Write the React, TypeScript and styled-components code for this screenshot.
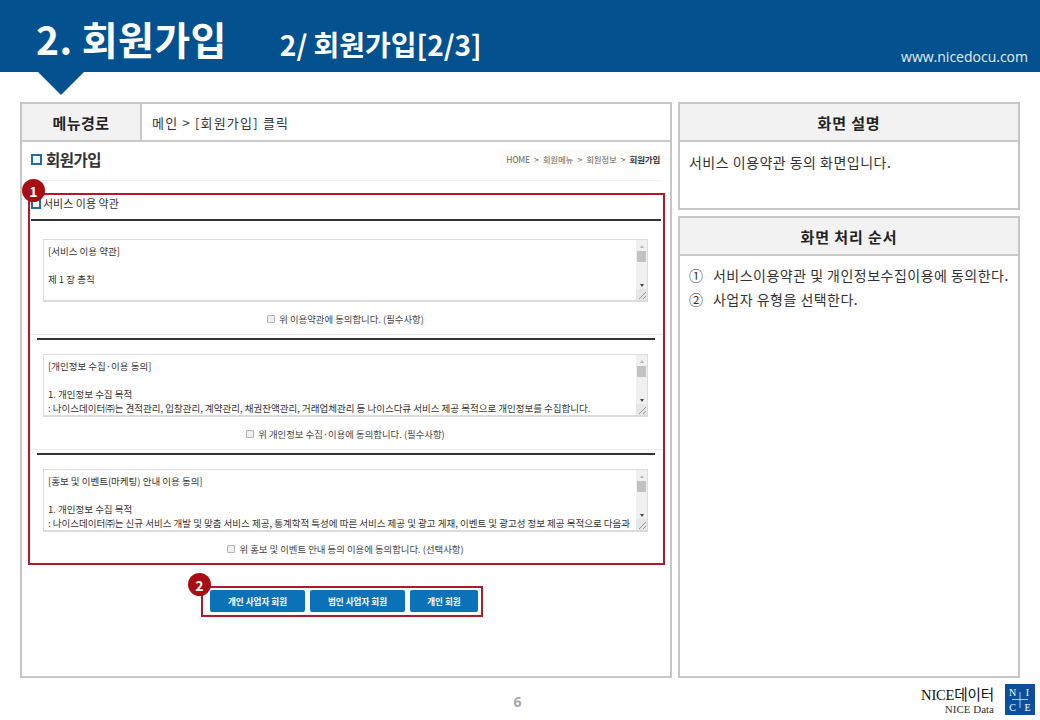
import React from "react";
import styled, { createGlobalStyle } from "styled-components";

const Global = createGlobalStyle`
  html, body { margin: 0; padding: 0; background: #fff; }
  * { box-sizing: border-box; }
  body { font-family: "Noto Sans CJK KR", "Noto Sans", sans-serif; color: #333; }
`;

const Slide = styled.div`
  width: 1040px; height: 720px; display: flex; flex-direction: column; overflow: hidden; background: #fff;
`;
const Header = styled.header`
  position: relative; flex: none; height: 72px; background: #03528f; color: #fff;
  display: flex; align-items: flex-start; padding: 0 12px 0 36px;
  &::after {
    content: ""; position: absolute; left: 38px; top: 72px;
    border-left: 23px solid transparent; border-right: 23px solid transparent; border-top: 23px solid #03528f;
  }
`;
const Title = styled.h1`
  margin: 12px 0 0; font-size: 39px; line-height: 52px; font-weight: 700; letter-spacing: 0.4px;
`;
const Subtitle = styled.h2`
  margin: 25px 0 0 53px; font-size: 28px; line-height: 38px; font-weight: 700; letter-spacing: 0;
`;
const Site = styled.span`
  margin: 47px 0 0 auto; font-family: "Open Sans", sans-serif; font-size: 14px; line-height: 20px; color: #e4edf5;
`;
const Main = styled.main`
  flex: none; height: 576px; margin-top: 30px; padding: 0 20px; display: flex; gap: 6px;
`;
const LeftPanel = styled.section`
  width: 652px; border: 2px solid #c6c6c6; display: flex; flex-direction: column;
`;
const MenuRow = styled.div`
  flex: none; height: 38px; display: flex; border-bottom: 2px solid #c9c9c9;
`;
const MenuLabel = styled.div`
  width: 120px; background: #f2f2f2; border-right: 2px solid #c9c9c9;
  display: flex; align-items: center; justify-content: center; font-size: 15px; font-weight: 700; color: #222; letter-spacing: 0.4px;
`;
const MenuValue = styled.div`
  flex: 1; padding-left: 10px; display: flex; align-items: center; font-size: 13px; letter-spacing: 1.2px; color: #333;
`;
const PageHead = styled.div`
  flex: none; height: 39px; margin: 0 9px 0 7px; padding-bottom: 4px; display: flex; align-items: center; justify-content: space-between;
  border-bottom: 1px solid #eeeeee;
`;
const PageTitle = styled.div`
  display: flex; align-items: center; gap: 4px; margin-left: 2px; font-size: 15.5px; font-weight: 700; color: #333; letter-spacing: -0.5px;
`;
const Square = styled.i<{ $size: number; $stroke: number }>`
  display: block; flex: none; width: ${p => p.$size}px; height: ${p => p.$size}px;
  border: ${p => p.$stroke}px solid #1f6ea8; background: #fff;
`;
const Crumbs = styled.div`
  display: flex; align-items: center; gap: 4.2px; padding: 3px 1px 3px 6px; background: #fdfcf9; font-size: 8.5px; color: #666; letter-spacing: -0.2px;
`;
const CrumbCurrent = styled.b`
  color: #333; font-weight: 700;
`;
const RedBox = styled.div`
  position: relative; flex: none; width: 637px; height: 372px; margin: 12px 0 0 6px; border: 2px solid #b2192a;
`;
const Badge = styled.span`
  position: absolute; width: 23px; height: 23px; border-radius: 50%; background: #a80f14; color: #fff;
  display: flex; align-items: center; justify-content: center; font-size: 14px; font-weight: 700;
`;
const BadgeOne = styled(Badge)`
  left: -8px; top: -16px;
`;
const BadgeTwo = styled(Badge)`
  left: -15px; top: -15px;
`;
const SectionTitle = styled.div`
  height: 24px; margin-left: 1px; display: flex; align-items: flex-start; gap: 2px; font-size: 11px; line-height: 16px; color: #333;
  ${Square} { margin-top: 4px; }
`;
const DarkRule = styled.div<{ $inset: number; $width: number }>`
  height: 2px; width: ${p => p.$width}px; margin-left: ${p => p.$inset}px; background: #333;
`;
const LightRule = styled.div`
  height: 1px; background: #e8e8e8; margin-bottom: 3px;
`;
const FakeArea = styled.div<{ $top: number }>`
  display: flex; width: 605px; height: 63px; margin: ${p => p.$top}px 0 0 13px; border: 1px solid #dcdcdc; border-bottom-width: 2px; background: #fff;
`;
const AreaText = styled.div`
  flex: 1; min-width: 0; overflow: hidden; padding: 3.5px 0 0 4px; font-size: 9.5px; line-height: 14.2px; color: #333; white-space: nowrap;
`;
const AreaLine = styled.div`
  height: 14.2px;
`;
const Scroll = styled.div`
  position: relative; flex: none; width: 11px; background: #f0f0f0; display: flex; flex-direction: column; align-items: center;
`;
const ArrowUp = styled.i`
  margin-top: 5px; border-left: 2.5px solid transparent; border-right: 2.5px solid transparent; border-bottom: 3px solid #b5b5b5;
`;
const Thumb = styled.i`
  width: 9px; height: 11px; margin-top: 3px; background: #c2c2c2;
`;
const ArrowDown = styled.i`
  margin-top: 22px; border-left: 2.5px solid transparent; border-right: 2.5px solid transparent; border-top: 3px solid #444;
`;
const Grip = styled.svg`
  position: absolute; right: 0; bottom: 0; width: 11px; height: 11px; background: #e6e6e6;
`;
const Agree = styled.div`
  height: 32px; width: 605px; margin-left: 13px; padding-top: 2px; display: flex; align-items: center; justify-content: center; gap: 4px;
  font-size: 9.4px; color: #444;
`;
const Check = styled.i`
  display: block; width: 8px; height: 8px; background: #efefef; border: 1px solid #b4b4b4; border-radius: 1px;
`;
const ActionRow = styled.div`
  position: relative; flex: none; align-self: flex-start; height: 31px; margin: 21px 0 0 179px; padding: 2px 3px 0 7px;
  border: 2px solid #b2192a; display: flex; gap: 5px;
`;
const ActionButton = styled.button<{ $w: number }>`
  width: ${p => p.$w}px; height: 22px; padding: 0; border: 0; border-radius: 2px; background: #0b72b8; color: #fff;
  font-family: inherit; font-size: 8.6px; font-weight: 700;
`;
const RightColumn = styled.aside`
  width: 342px; display: flex; flex-direction: column; gap: 6px;
`;
const InfoBox = styled.section<{ $h?: number }>`
  border: 2px solid #c6c6c6; ${p => (p.$h ? `height: ${p.$h}px;` : "flex: 1;")}
`;
const InfoHead = styled.div`
  height: 38px; background: #f2f2f2; border-bottom: 2px solid #c9c9c9;
  display: flex; align-items: center; justify-content: center; font-size: 15px; font-weight: 700; color: #222; letter-spacing: 0.9px;
`;
const InfoText = styled.p`
  margin: 0; padding: 10px 9px; font-size: 14px; line-height: 20px; letter-spacing: 0.48px; color: #333;
`;
const Steps = styled.ol`
  list-style: none; margin: 0; padding: 7px 0 0 9px;
`;
const Step = styled.li`
  display: flex; height: 24px; align-items: center; font-size: 14px; letter-spacing: 0.48px; color: #333; white-space: nowrap;
`;
const StepNo = styled.span`
  width: 24px; flex: none; letter-spacing: 0;
`;
const Footer = styled.footer`
  flex: 1; display: grid; grid-template-columns: 1fr auto 1fr; padding: 6px 5px 0 20px;
`;
const PageNo = styled.div`
  grid-column: 2; margin: 8px 0 0 -14px; font-family: "Open Sans", sans-serif; font-size: 14px; line-height: 20px; font-weight: 700; color: #a8a8a8;
`;
const Logo = styled.div`
  grid-column: 3; justify-self: end; display: flex; gap: 11px; align-items: flex-start;
`;
const LogoWords = styled.div`
  margin-top: 4px; display: flex; flex-direction: column; align-items: flex-end; font-family: "Liberation Serif", "Noto Sans CJK KR", serif; color: #222;
`;
const LogoMain = styled.span`
  font-size: 14.6px; line-height: 15px; letter-spacing: -0.2px; color: #111;
`;
const LogoSub = styled.span`
  font-size: 11px; line-height: 12px; color: #333;
`;

const terms = [
  { lines: ["[서비스 이용 약관]", "", "제 1 장 총칙"], agree: "위 이용약관에 동의합니다. (필수사항)" },
  { lines: ["[개인정보 수집·이용 동의]", "", "1. 개인정보 수집 목적", " : 나이스데이터㈜는 견적관리, 입찰관리, 계약관리, 채권잔액관리, 거래업체관리 등 나이스다큐 서비스 제공 목적으로 개인정보를 수집합니다."], agree: "위 개인정보 수집·이용에 동의합니다. (필수사항)" },
  { lines: ["[홍보 및 이벤트(마케팅) 안내 이용 동의]", "", "1. 개인정보 수집 목적", " : 나이스데이터㈜는 신규 서비스 개발 및 맞춤 서비스 제공, 통계학적 특성에 따른 서비스 제공 및 광고 게재, 이벤트 및 광고성 정보 제공 목적으로 다음과"], agree: "위 홍보 및 이벤트 안내 등의 이용에 동의합니다. (선택사항)" },
];

function Term({ lines, agree, top }: { lines: string[]; agree: string; top: number }) {
  return (
    <>
      <FakeArea $top={top}>
        <AreaText>
          {lines.map((l, i) => <AreaLine key={i}>{l}</AreaLine>)}
        </AreaText>
        <Scroll>
          <ArrowUp />
          <Thumb />
          <ArrowDown />
          <Grip viewBox="0 0 11 11">
            <path d="M3 10 L10 3 M7 10 L10 7" stroke="#888" strokeWidth="0.8" fill="none" />
          </Grip>
        </Scroll>
      </FakeArea>
      <Agree><Check />{agree}</Agree>
    </>
  );
}

export default function App() {
  return (
    <Slide>
      <Global />
      <Header>
        <Title>2. 회원가입</Title>
        <Subtitle>2/ 회원가입[2/3]</Subtitle>
        <Site>www.nicedocu.com</Site>
      </Header>
      <Main>
        <LeftPanel>
          <MenuRow>
            <MenuLabel>메뉴경로</MenuLabel>
            <MenuValue>메인 &gt; [회원가입] 클릭</MenuValue>
          </MenuRow>
          <PageHead>
            <PageTitle><Square $size={11} $stroke={2.5} />회원가입</PageTitle>
            <Crumbs>
              <span>HOME</span><span>&gt;</span><span>회원메뉴</span><span>&gt;</span><span>회원정보</span><span>&gt;</span><CrumbCurrent>회원가입</CrumbCurrent>
            </Crumbs>
          </PageHead>
          <RedBox>
            <BadgeOne>1</BadgeOne>
            <SectionTitle><Square $size={10} $stroke={2} />서비스 이용 약관</SectionTitle>
            <DarkRule $inset={1} $width={630} />
            <Term {...terms[0]} top={18} />
            <LightRule />
            <DarkRule $inset={7} $width={618} />
            <Term {...terms[1]} top={14} />
            <LightRule />
            <DarkRule $inset={7} $width={618} />
            <Term {...terms[2]} top={14} />
          </RedBox>
          <ActionRow>
            <BadgeTwo>2</BadgeTwo>
            <ActionButton $w={95}>개인 사업자 회원</ActionButton>
            <ActionButton $w={95}>법인 사업자 회원</ActionButton>
            <ActionButton $w={68}>개인 회원</ActionButton>
          </ActionRow>
        </LeftPanel>
        <RightColumn>
          <InfoBox $h={108}>
            <InfoHead>화면 설명</InfoHead>
            <InfoText>서비스 이용약관 동의 화면입니다.</InfoText>
          </InfoBox>
          <InfoBox>
            <InfoHead>화면 처리 순서</InfoHead>
            <Steps>
              <Step><StepNo>①</StepNo>서비스이용약관 및 개인정보수집이용에 동의한다.</Step>
              <Step><StepNo>②</StepNo>사업자 유형을 선택한다.</Step>
            </Steps>
          </InfoBox>
        </RightColumn>
      </Main>
      <Footer>
        <PageNo>6</PageNo>
        <Logo>
          <LogoWords>
            <LogoMain>NICE데이터</LogoMain>
            <LogoSub>NICE Data</LogoSub>
          </LogoWords>
          <svg width="30" height="31" viewBox="0 0 30 31">
            <rect width="30" height="31" fill="#0b4f9c" />
            <path d="M15 8 V24 M7 15.5 H23" stroke="#dfe9f5" strokeWidth="0.8" />
            <text x="7.5" y="12" fontFamily="Liberation Serif, serif" fontSize="10" fill="#fff" textAnchor="middle">N</text>
            <text x="22.5" y="12" fontFamily="Liberation Serif, serif" fontSize="10" fill="#fff" textAnchor="middle">I</text>
            <text x="7.5" y="27" fontFamily="Liberation Serif, serif" fontSize="10" fill="#fff" textAnchor="middle">C</text>
            <text x="22.5" y="27" fontFamily="Liberation Serif, serif" fontSize="10" fill="#fff" textAnchor="middle">E</text>
          </svg>
        </Logo>
      </Footer>
    </Slide>
  );
}
